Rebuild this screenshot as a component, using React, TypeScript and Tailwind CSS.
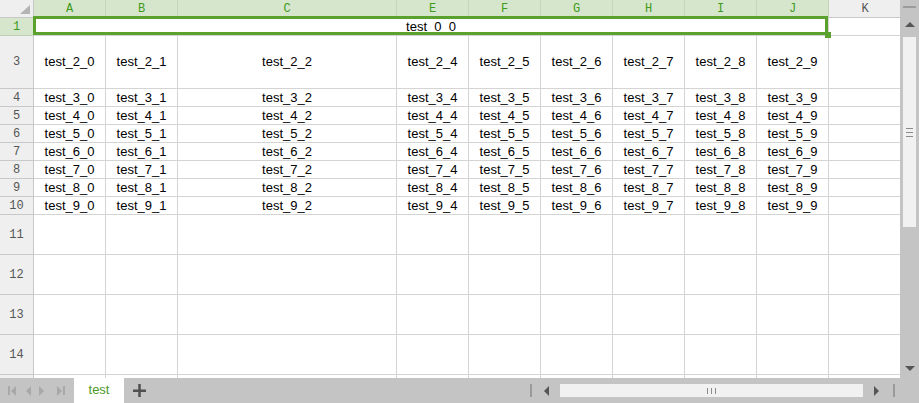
import React from "react";

const cols = [
  { key: "A", idx: 0 },
  { key: "B", idx: 1 },
  { key: "C", idx: 2 },
  { key: "E", idx: 4 },
  { key: "F", idx: 5 },
  { key: "G", idx: 6 },
  { key: "H", idx: 7 },
  { key: "I", idx: 8 },
  { key: "J", idx: 9 },
];

const dataRows = [3, 4, 5, 6, 7, 8, 9, 10];
const emptyRows = [11, 12, 13, 14, 15];

const cell =
  "border-r border-b border-[#d4d4d4] flex items-center justify-center text-[13px] text-black whitespace-nowrap";
const rowHead =
  "bg-[#efefef] border-r border-b border-[#c8c8c8] flex items-center justify-center font-['Liberation_Mono',monospace] text-[12px] text-[#555555]";

const Tri = ({ dir, color = "#555555" }: { dir: "up" | "down" | "left" | "right"; color?: string }) => {
  const pts = {
    up: "0,5 5,0 10,5",
    down: "0,0 10,0 5,5",
    left: "5,0 5,10 0,5",
    right: "0,0 0,10 5,5",
  }[dir];
  const vert = dir === "up" || dir === "down";
  return (
    <svg width={vert ? 10 : 5} height={vert ? 5 : 10} viewBox={vert ? "0 0 10 5" : "0 0 5 10"}>
      <polygon points={pts} fill={color} />
    </svg>
  );
};

export default function App() {
  return (
    <div className="w-[919px] h-[403px] flex flex-col bg-white overflow-hidden font-['Liberation_Sans',Arial,sans-serif]">
      <div className="flex h-[378px]">
        <div className="w-[900px] overflow-hidden">
          <div className="grid grid-cols-[34px_72px_72px_219px_72px_72px_72px_72px_72px_72px_72px] w-[901px]">
            {/* header row */}
            <div className="h-[18px] bg-[#efefef] border-r border-b border-[#c8c8c8] flex items-end justify-end pr-[3px] pb-[3px]">
              <svg width="10" height="9" viewBox="0 0 10 9">
                <polygon points="10,0 10,9 0,9" fill="#b4b4b4" />
              </svg>
            </div>
            {cols.map((c) => (
              <div
                key={c.key}
                className="h-[18px] bg-[#d6e6cd] border-r border-b border-r-[#c4d6ba] border-b-[#bcd0b0] flex items-center justify-center font-['Liberation_Mono',monospace] text-[12px] text-[#3f9a1a]"
              >
                {c.key}
              </div>
            ))}
            <div className="h-[18px] bg-[#efefef] border-b border-[#c8c8c8] flex items-center justify-center font-['Liberation_Mono',monospace] text-[12px] text-[#555555]">
              K
            </div>

            {/* row 1 merged */}
            <div className="h-[18px] bg-[#d6e6cd] border-r border-b border-[#bcd0b0] flex items-center justify-center font-['Liberation_Mono',monospace] text-[12px] text-[#3f9a1a]">
              1
            </div>
            <div className={`${cell} col-span-9 h-[18px] relative`}>
              test_0_0
              <div className="absolute left-[-1px] top-[-2px] right-0 bottom-0 border-[3px] border-[#5ba12d]" />
              <div className="absolute right-[-3px] bottom-[-3px] w-[6px] h-[6px] bg-[#5ba12d]" />
            </div>
            <div className={`${cell} h-[18px]`} />

            {dataRows.map((r) => (
              <React.Fragment key={r}>
                <div className={`${rowHead} ${r === 3 ? "h-[53px]" : "h-[18px]"}`}>{r}</div>
                {cols.map((c) => (
                  <div key={c.key} className={`${cell} ${r === 3 ? "h-[53px]" : "h-[18px]"}`}>
                    test_{r - 1}_{c.idx}
                  </div>
                ))}
                <div className={`${cell} ${r === 3 ? "h-[53px]" : "h-[18px]"}`} />
              </React.Fragment>
            ))}

            {emptyRows.map((r) => (
              <React.Fragment key={r}>
                <div className={`${rowHead} h-[40px]`}>{r}</div>
                {cols.map((c) => (
                  <div key={c.key} className={`${cell} h-[40px]`} />
                ))}
                <div className={`${cell} h-[40px]`} />
              </React.Fragment>
            ))}
          </div>
        </div>

        {/* vertical scrollbar */}
        <div className="w-[19px] bg-[#c4c4c4] flex flex-col items-center">
          <div className="mt-[6px] w-[13px] h-[2px] bg-[#9c9c9c]" />
          <div className="mt-[14px]">
            <Tri dir="up" />
          </div>
          <div className="mt-[10px] w-[13px] h-[190px] bg-[#f1f1f1] flex flex-col items-center justify-center gap-[3px]">
            <div className="w-[7px] h-px bg-[#8a8a8a]" />
            <div className="w-[7px] h-px bg-[#8a8a8a]" />
            <div className="w-[7px] h-px bg-[#8a8a8a]" />
          </div>
          <div className="flex-1" />
          <div className="mb-[7px]">
            <Tri dir="down" />
          </div>
        </div>
      </div>

      {/* bottom bar */}
      <div className="h-[25px] bg-[#c4c4c4] flex items-center">
        <div className="w-[74px] h-full flex items-center">
          <div className="ml-[8px] flex items-center">
            <div className="w-[2px] h-[9px] bg-[#a8a8a8]" />
            <div className="ml-[1px]">
              <Tri dir="left" color="#a8a8a8" />
            </div>
          </div>
          <div className="ml-[10px]">
            <Tri dir="left" color="#a8a8a8" />
          </div>
          <div className="ml-[8px]">
            <Tri dir="right" color="#a8a8a8" />
          </div>
          <div className="ml-[13px] flex items-center">
            <Tri dir="right" color="#a8a8a8" />
            <div className="ml-[1px] w-[2px] h-[9px] bg-[#a8a8a8]" />
          </div>
        </div>
        <div className="w-[50px] h-full bg-white flex items-center justify-center text-[13px] text-[#4c9a2a] pb-px">
          test
        </div>
        <div className="ml-[9px]">
          <svg width="13" height="13" viewBox="0 0 13 13">
            <rect x="0" y="5.5" width="13" height="2.5" fill="#505050" />
            <rect x="5.25" y="0" width="2.5" height="13" fill="#505050" />
          </svg>
        </div>
        <div className="ml-[384px] w-[2px] h-[13px] bg-[#9a9a9a]" />
        <div className="ml-[12px]">
          <Tri dir="left" />
        </div>
        <div className="ml-[11px] w-[303px] h-[13px] bg-[#f1f1f1] flex items-center justify-center gap-[3px]">
          <div className="w-px h-[6px] bg-[#8a8a8a]" />
          <div className="w-px h-[6px] bg-[#8a8a8a]" />
          <div className="w-px h-[6px] bg-[#8a8a8a]" />
        </div>
        <div className="ml-[11px]">
          <Tri dir="right" />
        </div>
        <div className="ml-[14px] w-[2px] h-[13px] bg-[#9a9a9a]" />
      </div>
    </div>
  );
}
